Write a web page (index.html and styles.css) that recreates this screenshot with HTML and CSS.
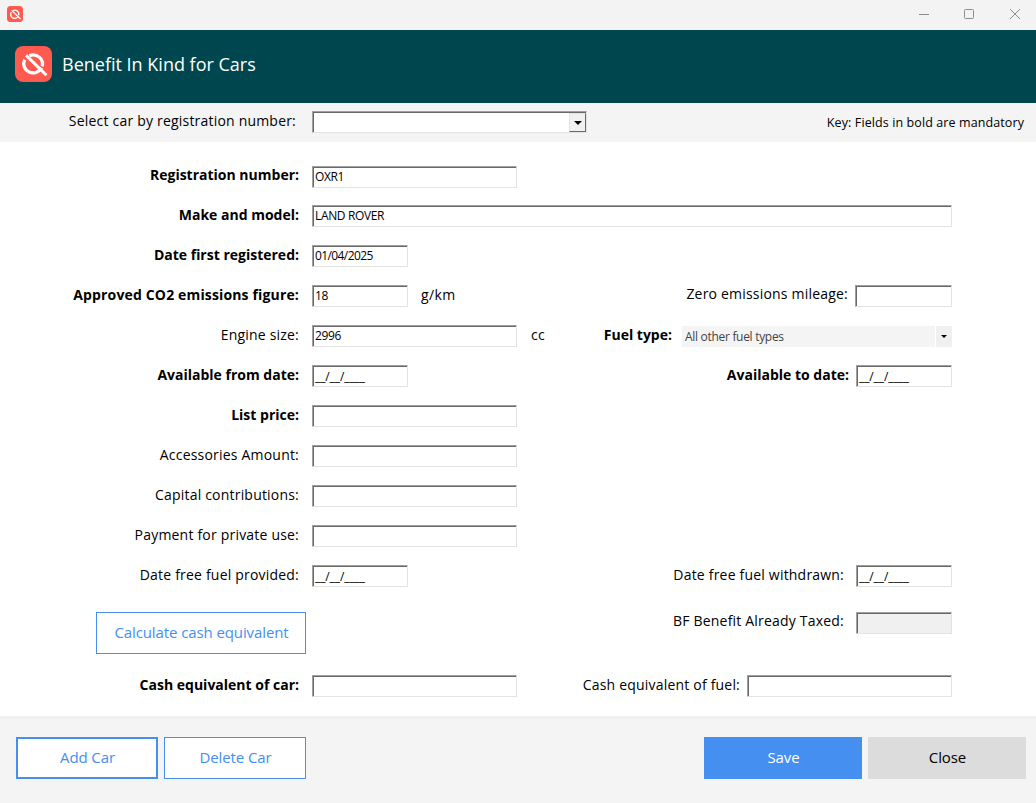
FILE: index.html
```html
<!DOCTYPE html>
<html lang="en">
<head>
  <meta charset="UTF-8">
  <meta name="viewport" content="width=device-width, initial-scale=1.0">
  <title>Benefit In Kind for Cars</title>
  <link rel="stylesheet" href="styles.css">
</head>
<body class="body">
  <div class="window">
    <div class="titlebar">
      <svg class="titlebar-logo" viewBox="0 0 36 36">
        <rect width="36" height="36" rx="8" fill="#ff5a50"/>
        <path d="M9.8 14a8.9 8.9 0 1 0 15.6 8.4M13.6 10.4a8.9 8.9 0 0 1 12.6 10.4" fill="none" stroke="#fff" stroke-width="3"/>
        <path d="M10.6 9.8L30.4 29.2" fill="none" stroke="#fff" stroke-width="3"/>
      </svg>
      <svg class="window-controls" width="104" height="12" viewBox="0 0 104 12" fill="none" stroke="#8d8d8d">
        <path d="M1 6.5h10"/>
        <rect x="46.5" y="1.5" width="9" height="9" rx="1"/>
        <path d="M92 1l10 10M102 1L92 11"/>
      </svg>
    </div>
    <header class="header">
      <svg class="header-logo" viewBox="0 0 36 36" preserveAspectRatio="none">
        <rect width="36" height="36" rx="8" fill="#ff5a50"/>
        <path d="M9.4 13.6a9 9 0 1 0 16.4 8.2M14 9.8a9 9 0 0 1 12.4 10.6" fill="none" stroke="#fff" stroke-width="3.2"/>
        <path d="M10.8 9.4L30.6 29.2" fill="none" stroke="#fff" stroke-width="3"/>
      </svg>
      <h1 class="title">Benefit In Kind for Cars</h1>
    </header>
    <div class="select-bar">
      <label class="label label-select">Select car by registration number:</label>
      <div class="combo">
        <button class="combo-button"><span class="arrow"></span></button>
      </div>
      <span class="key">Key: Fields in bold are mandatory</span>
    </div>
    <main class="form">
      <div class="row row-first">
        <label class="label bold raised">Registration number:</label>
        <div class="field medium">OXR1</div>
      </div>
      <div class="row">
        <label class="label bold">Make and model:</label>
        <div class="field wide">LAND ROVER</div>
      </div>
      <div class="row">
        <label class="label bold">Date first registered:</label>
        <div class="field small date">01/04/2025</div>
      </div>
      <div class="row">
        <label class="label bold label-co2">Approved CO2 emissions figure:</label>
        <div class="field small">18</div>
        <span class="unit">g/km</span>
        <div class="right">
          <label class="right-label raised">Zero emissions mileage:</label>
          <div class="field small mileage"></div>
        </div>
      </div>
      <div class="row">
        <label class="label">Engine size:</label>
        <div class="field medium">2996</div>
        <span class="unit unit-cc">cc</span>
        <div class="right">
          <label class="right-label bold fuel-label">Fuel type:</label>
          <div class="fuel">
            <span class="fuel-value">All other fuel types</span>
            <span class="fuel-button"><span class="arrow arrow-small"></span></span>
          </div>
        </div>
      </div>
      <div class="row">
        <label class="label bold">Available from date:</label>
        <div class="field small mask">__/__/____</div>
        <div class="right">
          <label class="right-label bold">Available to date:</label>
          <div class="field small mask">__/__/____</div>
        </div>
      </div>
      <div class="row">
        <label class="label bold">List price:</label>
        <div class="field medium"></div>
      </div>
      <div class="row">
        <label class="label">Accessories Amount:</label>
        <div class="field medium"></div>
      </div>
      <div class="row">
        <label class="label">Capital contributions:</label>
        <div class="field medium"></div>
      </div>
      <div class="row">
        <label class="label">Payment for private use:</label>
        <div class="field medium"></div>
      </div>
      <div class="row">
        <label class="label">Date free fuel provided:</label>
        <div class="field small mask">__/__/____</div>
        <div class="right">
          <label class="right-label fuel-withdrawn">Date free fuel withdrawn:</label>
          <div class="field small mask">__/__/____</div>
        </div>
      </div>
      <div class="row row-calculate">
        <button class="button button-calculate">Calculate cash equivalent</button>
        <div class="right">
          <label class="right-label taxed raised">BF Benefit Already Taxed:</label>
          <div class="field small disabled"></div>
        </div>
      </div>
      <div class="row">
        <label class="label bold">Cash equivalent of car:</label>
        <div class="field medium"></div>
        <div class="right">
          <label class="right-label">Cash equivalent of fuel:</label>
          <div class="field medium"></div>
        </div>
      </div>
    </main>
    <footer class="footer">
      <button class="button button-focus">Add Car</button>
      <button class="button">Delete Car</button>
      <button class="button button-save">Save</button>
      <button class="button button-close">Close</button>
    </footer>
  </div>
</body>
</html>
```
FILE: styles.css
```css
.body {
  margin: 0;
  font-family: "Open Sans", "Noto Sans", sans-serif;
  font-size: 14px;
  color: #000;
}
.window {
  width: 1036px;
  height: 803px;
  display: flex;
  flex-direction: column;
  background-color: #fff;
  overflow: hidden;
}
.titlebar {
  height: 30px;
  padding: 0 14px 0 7px;
  display: flex;
  align-items: center;
  justify-content: space-between;
  flex-shrink: 0;
  box-sizing: border-box;
  background-color: #f3f3f3;
}
.titlebar-logo {
  width: 16px;
  height: 16px;
  margin-bottom: 2px;
}
.window-controls {
  margin-bottom: 2px;
}
.header {
  height: 73px;
  padding: 16px 15px 0;
  display: flex;
  align-items: flex-start;
  gap: 10px;
  flex-shrink: 0;
  box-sizing: border-box;
  background-color: #00464f;
}
.header-logo {
  width: 37px;
  height: 36px;
}
.title {
  margin: 0;
  font-size: 18px;
  font-weight: 400;
  line-height: 36px;
  color: #fff;
}
.select-bar {
  height: 39px;
  padding: 8px 12px 0 0;
  display: flex;
  align-items: flex-start;
  flex-shrink: 0;
  box-sizing: border-box;
  background-color: #f4f4f4;
}
.label {
  width: 299px;
  margin-right: 13px;
  text-align: right;
  line-height: 20px;
  letter-spacing: 0.2px;
  white-space: nowrap;
}
.label-select {
  width: 296px;
  margin-right: 16px;
}
.bold {
  font-weight: 700;
  letter-spacing: 0;
}
.label-co2 {
  letter-spacing: 0.15px;
}
.combo {
  width: 275px;
  height: 22px;
  display: flex;
  justify-content: flex-end;
  box-sizing: border-box;
  border: 1px solid #a0a0a0;
  border-right-color: #e3e3e3;
  border-bottom-color: #e3e3e3;
  box-shadow: inset 1px 1px #696969;
  padding: 1px 0 0;
  background-color: #fff;
}
.combo-button {
  width: 17px;
  height: 19px;
  padding: 0;
  display: flex;
  align-items: center;
  justify-content: center;
  border: 1px solid #e3e3e3;
  border-right-color: #696969;
  border-bottom-color: #696969;
  background-color: #f0f0f0;
}
.arrow {
  border: 4px solid transparent;
  border-top-color: #000;
  border-bottom: none;
}
.arrow-small {
  border-width: 3px;
  border-bottom: none;
}
.key {
  margin-left: auto;
  font-size: 12.5px;
  line-height: 23px;
  letter-spacing: 0.1px;
}
.form {
  padding-top: 23px;
  height: 574px;
  flex-shrink: 0;
  box-sizing: border-box;
}
.row {
  height: 22px;
  padding-right: 84px;
  margin-bottom: 18px;
  display: flex;
  align-items: flex-start;
}
.row-first {
  padding-top: 1px;
  margin-bottom: 17px;
}
.row-calculate {
  height: 42px;
  margin: 25px 0 21px;
}
.field {
  height: 22px;
  padding: 0 2px;
  box-sizing: border-box;
  border: 1px solid #a0a0a0;
  border-right-color: #e3e3e3;
  border-bottom-color: #e3e3e3;
  box-shadow: inset 1px 1px #696969;
  background-color: #fff;
  font-size: 12px;
  line-height: 20px;
  letter-spacing: -0.35px;
  white-space: nowrap;
}
.small {
  width: 96px;
}
.medium {
  width: 205px;
}
.wide {
  width: 640px;
}
.mileage {
  width: 97px;
}
.date {
  letter-spacing: -0.6px;
}
.mask {
  line-height: 21px;
  letter-spacing: -0.1px;
}
.disabled {
  background-color: #f0f0f0;
}
.unit {
  margin-left: 13px;
  line-height: 20px;
  letter-spacing: 0.4px;
}
.unit-cc {
  margin-left: 14px;
}
.right {
  margin-left: auto;
  display: flex;
}
.right-label {
  margin-right: 7px;
  line-height: 20px;
  letter-spacing: 0.2px;
  white-space: nowrap;
}
.right-label.bold {
  letter-spacing: 0;
}
.raised {
  line-height: 18px;
}
.fuel-label {
  margin-right: 10px;
}
.fuel-withdrawn,
.taxed {
  margin-right: 12px;
}
.fuel {
  width: 270px;
  height: 21px;
  margin-top: 1px;
  display: flex;
  gap: 1px;
}
.fuel-value {
  flex: 1;
  padding-left: 3px;
  background-color: #f4f4f4;
  color: #444;
  font-size: 12px;
  line-height: 21px;
  letter-spacing: -0.3px;
}
.fuel-button {
  width: 16px;
  display: flex;
  align-items: center;
  justify-content: center;
  background-color: #f0f0f0;
}
.button {
  width: 142px;
  height: 42px;
  padding: 0 0 2px 1px;
  box-sizing: border-box;
  border: 1px solid #448fef;
  background-color: #fff;
  color: #448fef;
  font-family: inherit;
  font-size: 15px;
  letter-spacing: -0.1px;
}
.button-calculate {
  width: 210px;
  margin-left: 96px;
}
.button-focus {
  border-width: 2px;
}
.button-save {
  width: 158px;
  margin-left: auto;
  background-color: #448fef;
  color: #fff;
}
.button-close {
  width: 158px;
  border-color: #dcdcdc;
  background-color: #dcdcdc;
  color: #000;
}
.footer {
  flex: 1;
  padding: 18px 10px 0 16px;
  display: flex;
  align-items: flex-start;
  gap: 6px;
  border-top: 3px solid #efefef;
  background-color: #f4f4f4;
}
```
